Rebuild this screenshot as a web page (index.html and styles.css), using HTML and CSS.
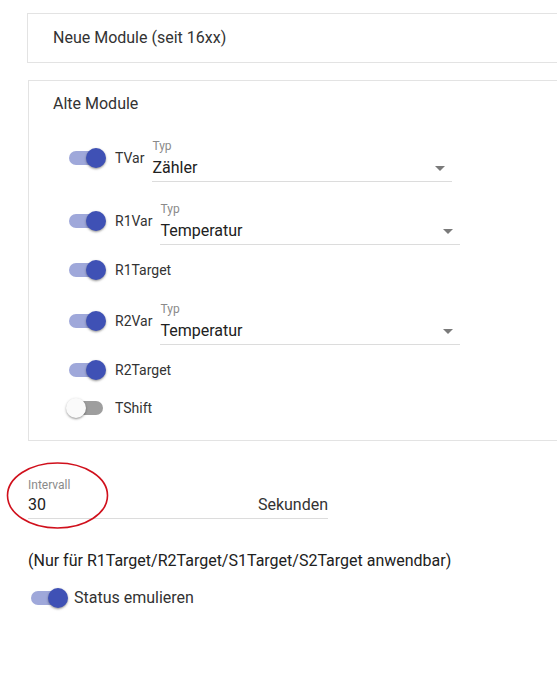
FILE: index.html
```html
<!DOCTYPE html>
<html lang="de">
<head>
<meta charset="utf-8">
<title>Module</title>
<link rel="stylesheet" href="styles.css">
</head>
<body>
<div class="page">
  <section class="panel panel-new">
    <h2 class="panel-title">Neue Module (seit 16xx)</h2>
  </section>

  <section class="panel panel-old">
    <h2 class="panel-title">Alte Module</h2>
    <div class="rows">
      <div class="row row-select row-first">
        <div class="toggle-group">
          <span class="switch on"><span class="track"></span><span class="thumb"></span></span>
          <span class="switch-label">TVar</span>
        </div>
        <div class="select">
          <span class="select-label">Typ</span>
          <div class="select-input"><span>Zähler</span>
            <svg class="arrow" viewBox="0 0 24 24" width="24" height="24"><path d="M7 10l5 5 5-5z"/></svg>
          </div>
        </div>
      </div>

      <div class="row row-select row-second">
        <div class="toggle-group">
          <span class="switch on"><span class="track"></span><span class="thumb"></span></span>
          <span class="switch-label">R1Var</span>
        </div>
        <div class="select">
          <span class="select-label">Typ</span>
          <div class="select-input"><span>Temperatur</span>
            <svg class="arrow" viewBox="0 0 24 24" width="24" height="24"><path d="M7 10l5 5 5-5z"/></svg>
          </div>
        </div>
      </div>

      <div class="row row-toggle">
        <div class="toggle-group">
          <span class="switch on"><span class="track"></span><span class="thumb"></span></span>
          <span class="switch-label">R1Target</span>
        </div>
      </div>

      <div class="row row-select row-mid">
        <div class="toggle-group">
          <span class="switch on"><span class="track"></span><span class="thumb"></span></span>
          <span class="switch-label">R2Var</span>
        </div>
        <div class="select">
          <span class="select-label">Typ</span>
          <div class="select-input"><span>Temperatur</span>
            <svg class="arrow" viewBox="0 0 24 24" width="24" height="24"><path d="M7 10l5 5 5-5z"/></svg>
          </div>
        </div>
      </div>

      <div class="row row-toggle">
        <div class="toggle-group">
          <span class="switch on"><span class="track"></span><span class="thumb"></span></span>
          <span class="switch-label">R2Target</span>
        </div>
      </div>

      <div class="row row-toggle row-last">
        <div class="toggle-group">
          <span class="switch off"><span class="track"></span><span class="thumb"></span></span>
          <span class="switch-label">TShift</span>
        </div>
      </div>
    </div>
  </section>

  <div class="field">
    <span class="field-label">Intervall</span>
    <div class="field-input">
      <span class="field-value">30</span>
      <span class="field-unit">Sekunden</span>
    </div>
  </div>

  <p class="note">(Nur für R1Target/R2Target/S1Target/S2Target anwendbar)</p>

  <div class="status">
    <span class="switch on"><span class="track"></span><span class="thumb"></span></span>
    <span class="status-label">Status emulieren</span>
  </div>

  <svg class="annotation" width="104" height="70" viewBox="0 0 104 70">
    <ellipse cx="51.5" cy="34.5" rx="50" ry="32.5" fill="none" stroke="#d0101c" stroke-width="1.6"/>
  </svg>
</div>
</body>
</html>
```

FILE: styles.css
```css
html, body {
  margin: 0;
  padding: 0;
  overflow: hidden;
  background: #ffffff;
}

body {
  font-family: Roboto, "Noto Sans", Arial, sans-serif;
  color: rgba(0, 0, 0, 0.87);
}

.page {
  position: relative;
  padding: 13px 0 0 28px;
  min-height: 680px;
  box-sizing: border-box;
}

.panel {
  border: 1px solid #e3e3e3;
  margin-right: -60px;
  box-sizing: border-box;
}

.panel-title {
  margin: 0;
  font-size: 16px;
  font-weight: 400;
  line-height: 20px;
  color: #333333;
}

.panel-new {
  margin-left: -1px;
  height: 50px;
  display: flex;
  align-items: center;
  padding-left: 25px;
}

.panel-old {
  margin-top: 17px;
  padding: 13px 0 13px 24px;
}

.panel-old .panel-title {
  margin-bottom: 12px;
}

.rows {
  display: flex;
  flex-direction: column;
  padding-left: 4px;
}

.row {
  display: flex;
  align-items: flex-start;
}

.row-select {
  margin-bottom: 6px;
}

.row-first {
  margin-top: 11px;
}

.row-second {
  margin-top: 12px;
}

.row-mid {
  margin-top: 11px;
}

.toggle-group {
  display: flex;
  align-items: center;
}

.row-select .toggle-group {
  margin-top: 2px;
}

.switch {
  position: relative;
  display: inline-block;
  width: 58px;
  height: 38px;
  flex: none;
}

.track {
  position: absolute;
  left: 12px;
  top: 12px;
  width: 34px;
  height: 14px;
  border-radius: 7px;
}

.thumb {
  position: absolute;
  top: 9px;
  width: 20px;
  height: 20px;
  border-radius: 50%;
  box-shadow: 0 1px 3px rgba(0, 0, 0, 0.22), 0 1px 2px rgba(0, 0, 0, 0.14), 0 2px 2px -1px rgba(0, 0, 0, 0.12);
}

.switch.on .track {
  background: #9fa8da;
}

.switch.on .thumb {
  left: 29px;
  background: #3f51b5;
}

.switch.off .track {
  background: #9e9e9e;
}

.switch.off .thumb {
  left: 9px;
  background: #fafafa;
}

.switch-label {
  font-size: 14px;
  line-height: 20px;
  color: #333333;
}

.select {
  margin-left: 8px;
  width: 300px;
  padding-top: 2px;
  border-bottom: 1px solid #dcdcdc;
  display: flex;
  flex-direction: column;
}

.select-label,
.field-label {
  font-size: 12px;
  line-height: 14px;
  color: #8a8a8a;
}

.select-input {
  display: flex;
  align-items: center;
  justify-content: space-between;
  height: 24px;
  margin-top: 3px;
  padding-bottom: 1px;
  font-size: 16px;
  line-height: 24px;
  color: #212121;
}

.arrow {
  fill: #7a7a7a;
  flex: none;
}

.field {
  margin-top: 37px;
  width: 300px;
  display: flex;
  flex-direction: column;
}

.field-input {
  display: flex;
  justify-content: space-between;
  align-items: center;
  margin-top: 1px;
  padding-bottom: 1px;
  border-bottom: 1px solid #dcdcdc;
  font-size: 16px;
  line-height: 24px;
  color: #212121;
}

.field-unit {
  color: #333333;
}

.note {
  margin: 32px 0 0 0;
  font-size: 16px;
  line-height: 20px;
  color: #212121;
}

.status {
  display: flex;
  align-items: center;
  margin-top: 8px;
  margin-left: -9px;
}

.status-label {
  font-size: 16px;
  line-height: 20px;
  color: #333333;
  margin-left: -3px;
}

.annotation {
  position: absolute;
  left: 6px;
  top: 461px;
}
```
